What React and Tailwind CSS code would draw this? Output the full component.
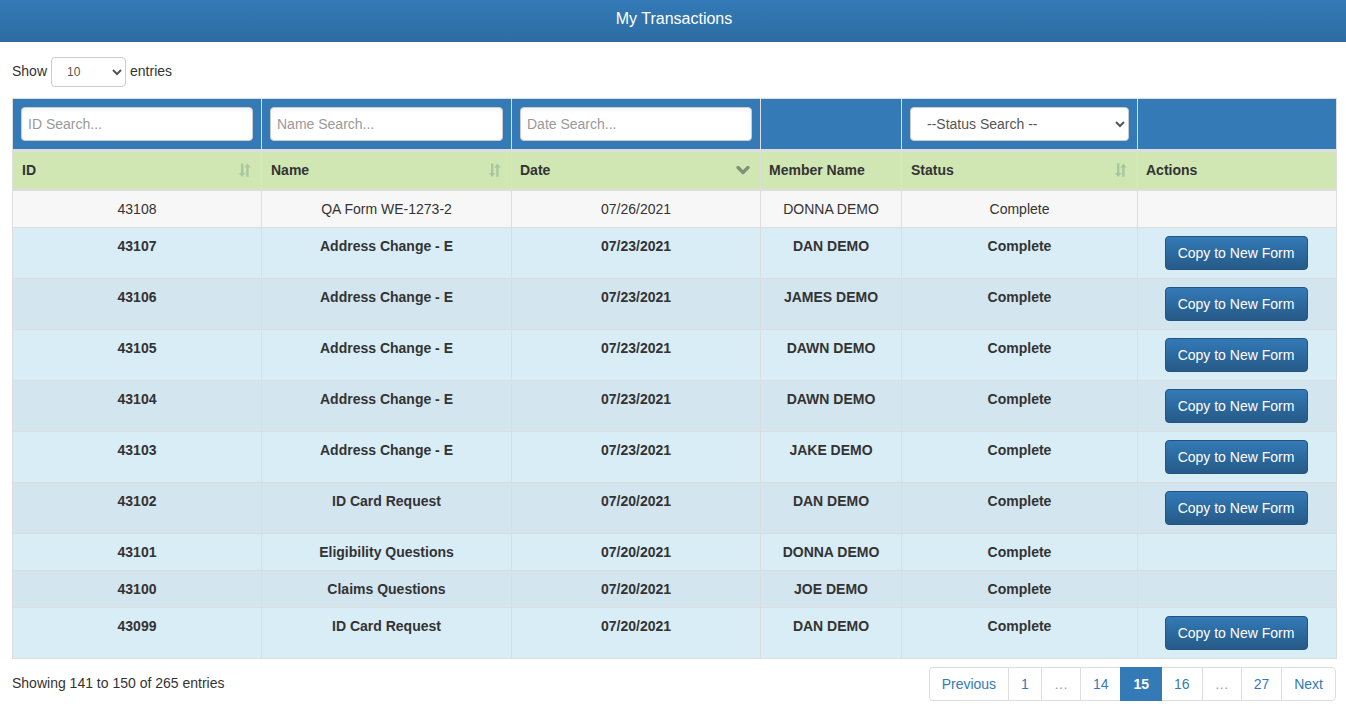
import { ChevronDown } from "lucide-react";

const rows = [
  ["43107", "Address Change - E", "07/23/2021", "DAN DEMO", true],
  ["43106", "Address Change - E", "07/23/2021", "JAMES DEMO", true],
  ["43105", "Address Change - E", "07/23/2021", "DAWN DEMO", true],
  ["43104", "Address Change - E", "07/23/2021", "DAWN DEMO", true],
  ["43103", "Address Change - E", "07/23/2021", "JAKE DEMO", true],
  ["43102", "ID Card Request", "07/20/2021", "DAN DEMO", true],
  ["43101", "Eligibility Questions", "07/20/2021", "DONNA DEMO", false],
  ["43100", "Claims Questions", "07/20/2021", "JOE DEMO", false],
  ["43099", "ID Card Request", "07/20/2021", "DAN DEMO", true],
];

const pages = ["1", "…", "14", "15", "16", "…", "27"];

function SortIcon() {
  return (
    <svg width="14" height="14" viewBox="0 0 14 14" className="text-[#a9c6a0]" fill="currentColor">
      <path d="M3 0.5h2.4v9.5h2L4.2 14 1 10h2z" />
      <path d="M9.4 0.5l3.2 4h-2v9.2H8.2V4.5h-2z" />
    </svg>
  );
}

function HeadCell({ label, icon, className }) {
  return (
    <th className={`h-[39px] border-x border-[#ddd] text-left font-bold ${className}`}>
      <div className="flex items-center justify-between">
        {label}
        {icon}
      </div>
    </th>
  );
}

function SearchInput({ placeholder }) {
  return (
    <input
      placeholder={placeholder}
      className="h-[34px] w-full rounded border border-[#ccc] bg-white px-[6px] text-sm shadow-inner placeholder:text-[#999]"
    />
  );
}

function Row({ row, odd }) {
  const cell = "border border-[#ddd] px-2 pt-2 pb-2 align-top text-center";
  return (
    <tr className={`font-bold ${odd ? "bg-[#d9edf7]" : "bg-[#d3e5ef]"}`}>
      <td className={cell}>{row[0]}</td>
      <td className={cell}>{row[1]}</td>
      <td className={cell}>{row[2]}</td>
      <td className={cell}>{row[3]}</td>
      <td className={cell}>Complete</td>
      <td className="border border-[#ddd] pt-2 pb-2 pl-2 pr-[10px] align-top text-center">
        {row[4] && (
          <button className="h-[34px] w-[143px] rounded border border-[#245580] bg-gradient-to-b from-[#337ab7] to-[#265a88] text-sm font-normal text-white">
            Copy to New Form
          </button>
        )}
      </td>
    </tr>
  );
}

export default function App() {
  return (
    <div className="bg-white font-['Liberation_Sans',Arial,sans-serif] text-sm leading-5 text-[#333]">
      <div className="flex h-[42px] items-center justify-center bg-gradient-to-b from-[#337ab7] to-[#2d6ca2] pb-[4px] pl-[2px] text-base text-white">
        My Transactions
      </div>
      <div className="pl-3 pr-[10px] pt-[15px]">
        <div className="flex h-[30px] items-center gap-1">
          <span className="pb-[2px]">Show</span>
          <select className="h-[30px] w-[75px] rounded border border-[#ccc] bg-white px-[11px] text-xs text-[#555]">
            <option>10</option>
          </select>
          <span className="pb-[2px]">entries</span>
        </div>
        <table className="mt-[11px] w-[1324px] table-fixed border-collapse border border-[#ddd]">
          <colgroup>
            <col className="w-[249px]" />
            <col className="w-[250px]" />
            <col className="w-[249px]" />
            <col className="w-[141px]" />
            <col className="w-[236px]" />
            <col className="w-[199px]" />
          </colgroup>
          <thead>
            <tr className="h-[52px] border-b-[3px] border-[#ddd] bg-[#337ab7]">
              <th className="border-x border-[#ddd] px-2 font-normal"><SearchInput placeholder="ID Search..." /></th>
              <th className="border-x border-[#ddd] px-2 font-normal"><SearchInput placeholder="Name Search..." /></th>
              <th className="border-x border-[#ddd] px-2 font-normal"><SearchInput placeholder="Date Search..." /></th>
              <th className="border-x border-[#ddd]"></th>
              <th className="border-x border-[#ddd] px-2 font-normal">
                <select className="h-[34px] w-full rounded border border-[#ccc] bg-white pl-3 text-sm text-[#555]">
                  <option>--Status Search --</option>
                </select>
              </th>
              <th className="border-x border-[#ddd]"></th>
            </tr>
            <tr className="border-b-2 border-[#ddd] bg-[#d0e6b3]">
              <HeadCell label="ID" icon={<SortIcon />} className="pl-[9px] pr-[9px]" />
              <HeadCell label="Name" icon={<SortIcon />} className="pl-[9px] pr-[9px]" />
              <HeadCell label="Date" icon={<ChevronDown size={20} strokeWidth={4} className="text-[#7d9376]" />} className="pl-2 pr-[7px]" />
              <HeadCell label="Member Name" className="px-2" />
              <HeadCell label="Status" icon={<SortIcon />} className="pl-[9px] pr-[9px]" />
              <HeadCell label="Actions" className="px-2" />
            </tr>
          </thead>
          <tbody>
            <tr className="bg-[#f7f7f7]">
              <td className="border border-[#ddd] p-2 text-center">43108</td>
              <td className="border border-[#ddd] p-2 text-center">QA Form WE-1273-2</td>
              <td className="border border-[#ddd] p-2 text-center">07/26/2021</td>
              <td className="border border-[#ddd] p-2 text-center">DONNA DEMO</td>
              <td className="border border-[#ddd] p-2 text-center">Complete</td>
              <td className="border border-[#ddd] p-2"></td>
            </tr>
            {rows.map((row, i) => (
              <Row key={row[0]} row={row} odd={i % 2 === 0} />
            ))}
          </tbody>
        </table>
        <div className="mt-2 flex items-start justify-between">
          <div className="pt-[6px]">Showing 141 to 150 of 265 entries</div>
          <div className="flex h-[34px] rounded border border-[#ddd] text-[#337ab7]">
            <a className="flex items-center px-3">Previous</a>
            {pages.map((p, i) =>
              p === "15" ? (
                <a key={i} className="relative -my-px -mr-px flex items-center bg-[#337ab7] px-[13px] font-bold text-white">{p}</a>
              ) : (
                <a key={i} className={`flex items-center border-l border-[#ddd] px-3 ${p === "…" ? "text-[#999]" : ""}`}>{p}</a>
              )
            )}
            <a className="flex items-center border-l border-[#ddd] px-3">Next</a>
          </div>
        </div>
      </div>
    </div>
  );
}
